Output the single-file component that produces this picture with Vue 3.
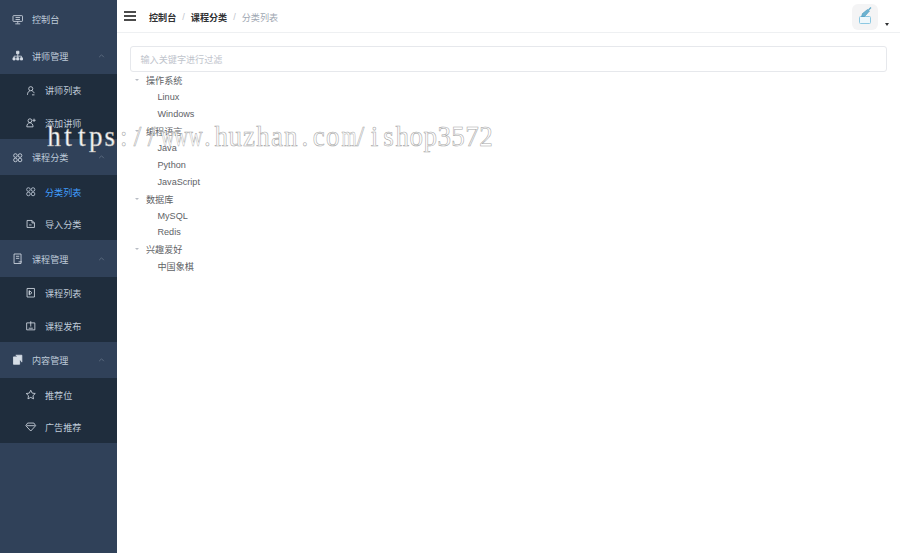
<script setup>
const menu = [
  { label: '控制台', icon: 'monitor' },
  { label: '讲师管理', icon: 'tree', open: true, children: [
    { label: '讲师列表', icon: 'user' },
    { label: '添加讲师', icon: 'useradd' }
  ] },
  { label: '课程分类', icon: 'grid', open: true, children: [
    { label: '分类列表', icon: 'grid', active: true },
    { label: '导入分类', icon: 'import' }
  ] },
  { label: '课程管理', icon: 'book', open: true, children: [
    { label: '课程列表', icon: 'list' },
    { label: '课程发布', icon: 'publish' }
  ] },
  { label: '内容管理', icon: 'docs', open: true, children: [
    { label: '推荐位', icon: 'star' },
    { label: '广告推荐', icon: 'gem' }
  ] }
]
const paths = {
  monitor: 'M2 2h10q.8 0 .8.8v5.400q0 .8-.8.8H2q-.8 0-.8-.8V2.800q0-.8.8-.8zM4.300 4.300h5.400M4.300 6.700h5.400M7 9v2.500M4 12h6',
  tree: 'M5.500 1.500h3v3h-3zM7 4.500v3M2.500 7.500h9M2.500 7.500v2M7 7.500v2M11.500 7.500v2M1.200 9.500h2.600v2.600H1.200zM5.700 9.500h2.600v2.600H5.700zM10.200 9.500h2.600v2.600h-2.600z',
  user: 'M7 2a2.300 2.300 0 1 0 0 5 2.300 2.300 0 0 0 0-5zM3 12c0-3 1.600-4.600 3-5M8 7c1.500.4 3 1.500 3 3M8.500 12h3',
  useradd: 'M6 2.200a2.300 2.300 0 1 0 0 4.600 2.300 2.300 0 0 0 0-4.600zM2.200 12c0-3 1.600-5 3.800-5s3.800 2 3.800 5zM11 2v4M9 4h4',
  grid: 'M2 4.300a2.200 2.200 0 1 1 4.400 0 2.200 2.200 0 1 1-4.400 0zM7.600 4.300a2.200 2.200 0 1 1 4.400 0 2.200 2.200 0 1 1-4.400 0zM2 9.700a2.200 2.200 0 1 1 4.400 0 2.200 2.200 0 1 1-4.400 0zM7.600 9.700a2.200 2.200 0 1 1 4.400 0 2.200 2.200 0 1 1-4.400 0z',
  import: 'M2.500 3h6L11.500 6v5.500h-9zM8.500 3v3h3M5 8.500h3',
  book: 'M2.500 1.200h8.500v11.600H2.500zM4.800 4h4M4.800 6.500h4M8 10.800h4',
  list: 'M2.500 1.800h9v10.400h-9zM5.500 4.500l3 2.500-3 2.500zM5 4.500v5',
  publish: 'M2 3.500h10v8.500H2zM7 1.500V8M4.500 10h5',
  docs: 'M1.800 3.500h7.500v9H1.800zM4.500 1.500H12v8.500',
  star: 'M7 1.500l1.700 3.500 3.800.5-2.800 2.700.7 3.800L7 10.200l-3.400 1.800.7-3.800-2.800-2.700 3.800-.5z',
  gem: 'M3.200 2.500h7.600L13 5.700 7 12.200 1 5.700zM2 5.700h10'
}
const solid = ['tree', 'docs']
const tree = [
  { label: '操作系统', children: ['Linux', 'Windows'] },
  { label: '编程语言', children: ['Java', 'Python', 'JavaScript'] },
  { label: '数据库', children: ['MySQL', 'Redis'] },
  { label: '兴趣爱好', children: ['中国象棋'] }
]
const mark = 'https://www.huzhan.com/ishop3572'.split('')
</script>

<template>
  <div class="app">
    <aside class="side">
      <template v-for="group in menu" :key="group.label">
        <div class="head">
          <svg class="ico" :class="{ solid: solid.includes(group.icon) }" viewBox="0 0 14 14"><path :d="paths[group.icon]" /></svg>
          <span class="label">{{ group.label }}</span>
          <svg v-if="group.open" class="chev" viewBox="0 0 8 5"><path d="M1 4l3-3 3 3" /></svg>
        </div>
        <div
          v-for="child in group.children"
          :key="child.label"
          class="sub"
          :class="{ active: child.active }"
        >
          <svg class="ico" viewBox="0 0 14 14"><path :d="paths[child.icon]" /></svg>
          <span class="label">{{ child.label }}</span>
        </div>
      </template>
    </aside>
    <main class="main">
      <header class="top">
        <svg class="burger" viewBox="0 0 12 10"><path d="M0 1h12M0 5h12M0 9h12" /></svg>
        <nav class="crumbs">
          <b>控制台</b><i>/</i><b>课程分类</b><i>/</i><span>分类列表</span>
        </nav>
        <div class="tools">
          <div class="avatar">
            <svg viewBox="0 0 26 26" class="ink">
              <rect class="bottle" x="7.500" y="12.500" width="11" height="7" rx="1" />
              <path class="pen" d="M9.500 12.500L10.500 9.500 15.500 5.500 17.500 7 14 11 12.500 12.500z" />
              <path class="nib" d="M16.500 6l2.500-2.500" />
            </svg>
          </div>
          <span class="caret"></span>
        </div>
      </header>
      <section class="content">
        <div class="filter">输入关键字进行过滤</div>
        <div class="tree">
          <template v-for="node in tree" :key="node.label">
            <div class="node"><span class="tri"></span>{{ node.label }}</div>
            <div v-for="leaf in node.children" :key="leaf" class="leaf">{{ leaf }}</div>
          </template>
        </div>
      </section>
    </main>
    <div class="mark"><span v-for="(c, i) in mark" :key="i" class="ch" :class="{ narrow: c === 'w' || c === 'm' }">{{ c }}</span></div>
  </div>
</template>

<style>
html, body { margin: 0; background: #fff; }
</style>

<style scoped>
.app {
  position: relative;
  display: flex;
  height: 553px;
  overflow: hidden;
  font-family: "Liberation Sans", "Noto Sans CJK SC", sans-serif;
  font-size: 9.1px;
}
.side {
  width: 117px;
  flex: none;
  padding-top: 1.300px;
  box-sizing: border-box;
  background: #304159;
}
.head, .sub {
  display: flex;
  align-items: center;
  box-sizing: border-box;
  color: #bfcbd9;
}
.head { height: 36.400px; padding-left: 12px; background: #304159; }
.sub { height: 32.500px; padding-left: 25px; background: #1f2d3d; }
.sub.active { color: #409eff; }
.sub.active .ico { stroke: #bfcbd9; }
.ico {
  width: 11.500px;
  height: 11.500px;
  flex: none;
  margin-right: 8.500px;
  fill: none;
  stroke: #d5dde6;
  stroke-width: 1;
}
.ico.solid { fill: #d5dde6; }
.label { white-space: nowrap; }
.chev {
  width: 7px;
  height: 4px;
  margin-left: auto;
  margin-right: 12.500px;
  fill: none;
  stroke: #6f7f92;
  stroke-width: 0.800;
}
.main { flex: 1; min-width: 0; display: flex; flex-direction: column; }
.top {
  height: 33px;
  box-sizing: border-box;
  flex: none;
  display: flex;
  align-items: center;
  padding-left: 7px;
  border-bottom: 1px solid #eef0f2;
}
.burger {
  width: 12px;
  height: 10px;
  flex: none;
  margin-right: 13px;
  fill: none;
  stroke: #111;
  stroke-width: 1.500;
}
.crumbs { display: flex; align-items: center; color: #303133; white-space: nowrap; margin-top: 1px; }
.crumbs b { font-weight: 700; }
.crumbs i { font-style: normal; color: #c0c4cc; margin: 0 6px; }
.crumbs span { color: #a0a8b2; }
.tools {
  margin-left: auto;
  align-self: flex-start;
  display: flex;
  align-items: flex-end;
  padding: 4px 11.500px 0 0;
}
.avatar {
  width: 26px;
  height: 26px;
  border-radius: 6px;
  background: #f4f4f5;
}
.ink { width: 26px; height: 26px; display: block; }
.bottle { fill: #eef7fb; stroke: #8cc8e2; stroke-width: 1; }
.pen { fill: #6db3d1; stroke: #3f8fb5; stroke-width: 0.500; }
.nib { fill: none; stroke: #5ea9c9; stroke-width: 1.200; }
.caret {
  width: 0;
  height: 0;
  margin-left: 6.500px;
  margin-bottom: 4.500px;
  border-left: 2.500px solid transparent;
  border-right: 2.500px solid transparent;
  border-top: 3px solid #303133;
}
.content { padding: 13px 13px 0; }
.filter {
  height: 26px;
  box-sizing: border-box;
  display: flex;
  align-items: center;
  padding-left: 9.500px;
  border: 1px solid #e6e8ec;
  border-radius: 3px;
  color: #c0c4cc;
}
.tree { color: #606266; }
.node, .leaf { height: 16.900px; display: flex; align-items: center; white-space: nowrap; }
.node { padding-left: 5px; }
.leaf { padding-left: 27.500px; }
.tri {
  width: 0;
  height: 0;
  margin-right: 7px;
  border-left: 2px solid transparent;
  border-right: 2px solid transparent;
  border-top: 2.500px solid #b8bcc4;
}
.mark {
  position: absolute;
  left: 47px;
  top: 120px;
  display: flex;
  font-family: "Liberation Serif", serif;
  font-size: 30px;
  line-height: 32px;
  color: #fff;
  -webkit-text-stroke: 0.600px #a8a8a8;
  white-space: nowrap;
  pointer-events: none;
  opacity: 0.99;
  transform: scaleX(0.9);
  transform-origin: left top;
}
.ch { width: 15.490px; flex: none; text-align: center; display: inline-block; }
.narrow { transform: scaleX(0.72); }
</style>
